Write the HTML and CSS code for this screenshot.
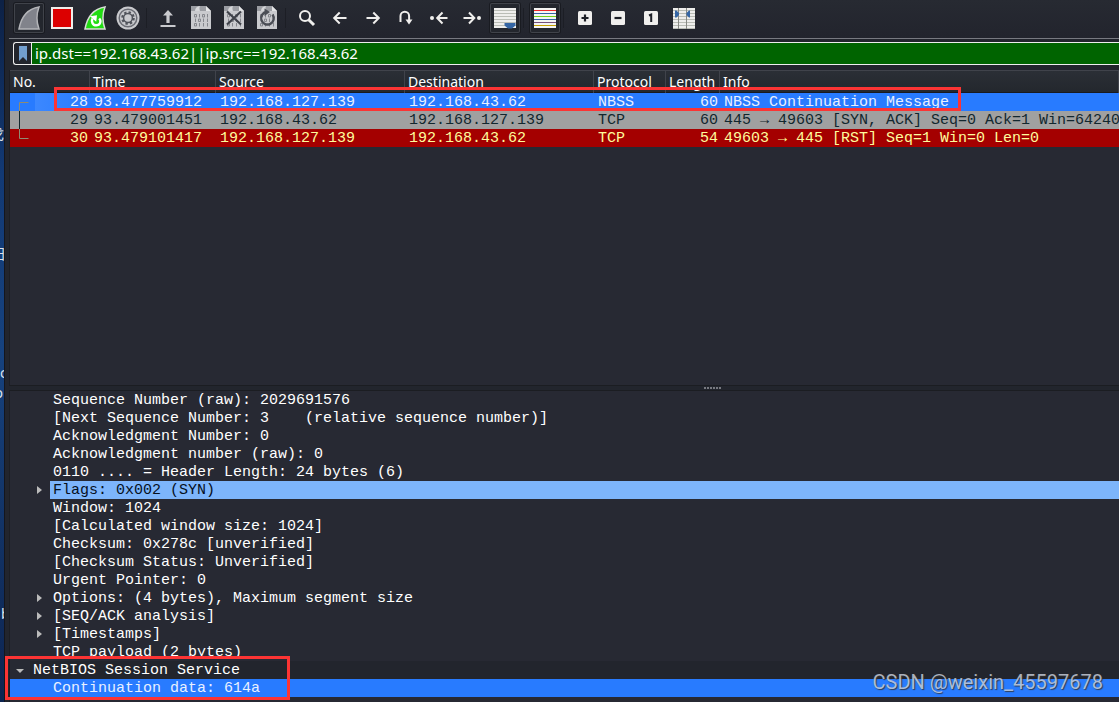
FILE: index.html
```
<!DOCTYPE html>
<html lang="en">
<head>
<meta charset="utf-8">
<title>Packet capture</title>
<link rel="stylesheet" href="styles.css">
</head>
<body>
<div class="desktop" aria-hidden="true">
  <span class="frag frag-a">戈</span>
  <span class="frag frag-b">日</span>
  <span class="frag frag-c">c</span>
  <span class="frag frag-d">o</span>
  <span class="frag frag-e">b</span>
</div>
<main class="window">
  <div class="toolbar" role="toolbar" aria-label="Capture tools">
    <button class="tool framed" aria-label="Start capture"><svg viewBox="0 0 30 30"><path d="M5 26C7 15 12 6 25 4c-3 8-3 14 0 22z" fill="#81838b" stroke="#b4b5b9" stroke-width="1.500"/></svg></button>
    <button class="tool" aria-label="Stop capture"><svg viewBox="0 0 30 30"><path d="M4 4h22v22H4z" fill="#f0eeea"/><path d="M6 6h18v18H6z" fill="#dc0000"/></svg></button>
    <button class="tool" aria-label="Restart capture"><svg viewBox="0 0 30 30"><path d="M5 26C7 15 12 6 25 4c-3 8-3 14 0 22z" fill="#21dc12" stroke="#d8dcd6" stroke-width="1.500"/><path d="M12.500 15.500c-1.500 3.200.2 6.800 3.700 6.800 4 0 5.500-4.300 3-6.800" fill="none" stroke="#fff" stroke-width="2.400"/><path d="M10 13.300l7-1-.8 6.400z" fill="#fff"/></svg></button>
    <button class="tool" aria-label="Capture options"><svg viewBox="0 0 30 30"><circle cx="15" cy="15" r="11.500" fill="#c9cace"/><circle cx="15" cy="15" r="8.800" fill="none" stroke="#6a6c74" stroke-width="1.500"/><circle cx="15" cy="15" r="5.500" fill="none" stroke="#50535b" stroke-width="2.600" stroke-dasharray="2.300 2"/><circle cx="15" cy="15" r="4.400" fill="#c9cace" stroke="#50535b" stroke-width="1.500"/></svg></button>
    <span class="sep"></span>
    <button class="tool" aria-label="Open"><svg viewBox="0 0 30 30"><path d="M15 7l5 5.500h-3.400V20h-3.200v-7.500H10zM7.500 22h15v2h-15z" fill="#c9cace"/></svg></button>
    <button class="tool" aria-label="Save"><svg viewBox="0 0 30 30"><use href="#doc"/></svg></button>
    <button class="tool" aria-label="Close file"><svg viewBox="0 0 30 30"><use href="#doc"/><path d="M8 8.500l14 13M22 8.500L8 21.500" stroke="#3e4149" stroke-width="2.200"/></svg></button>
    <button class="tool" aria-label="Reload file"><svg viewBox="0 0 30 30"><use href="#doc"/><path d="M20.500 11.500a6.300 6.300 0 1 1-6-2.500" fill="none" stroke="#4b4e56" stroke-width="2.400"/><path d="M12.500 5.500l5.500 3.500-5.500 4z" fill="#4b4e56"/></svg></button>
    <span class="sep"></span>
    <button class="tool" aria-label="Find"><svg viewBox="0 0 30 30"><circle cx="13" cy="13" r="5" class="line"/><path d="M16.700 16.700l5.300 5.300" class="line heavy"/></svg></button>
    <button class="tool" aria-label="Back"><svg viewBox="0 0 30 30"><path d="M21.500 15H9.500M14.700 9.500L9.200 15l5.500 5.500" class="line"/></svg></button>
    <button class="tool" aria-label="Forward"><svg viewBox="0 0 30 30"><path d="M8.500 15h12M15.300 9.500l5.500 5.500-5.500 5.500" class="line"/></svg></button>
    <button class="tool" aria-label="Go to packet"><svg viewBox="0 0 30 30"><path d="M9.500 19V13a4.300 4.300 0 0 1 8.600 0v5" class="line"/><path d="M14.500 16.500h7L18 21.500z" fill="#f0efed"/></svg></button>
    <button class="tool" aria-label="First packet"><svg viewBox="0 0 30 30"><path d="M23.500 15h-9M18.500 9.500L13.200 15l5.300 5.500" class="line"/><circle cx="8" cy="15" r="2" fill="#f0efed"/></svg></button>
    <button class="tool" aria-label="Last packet"><svg viewBox="0 0 30 30"><path d="M6.500 15h10M12 9.500l5.300 5.500-5.300 5.500" class="line"/><circle cx="22" cy="15" r="2" fill="#f0efed"/></svg></button>
    <button class="tool framed" aria-label="Auto scroll"><svg viewBox="0 0 30 30"><path d="M4 5h22v20H4z" fill="#eeeeec"/><path d="M4 7.500h22M4 10.500h22M4 13.500h22M4 16.500h22M4 19.500h22M4 22.500h22" stroke="#babdb6"/><path d="M14.500 20h11v2.500L22 25.500h-4L14.500 22.500z" fill="#3465a4"/></svg></button>
    <span class="sep"></span>
    <button class="tool framed" aria-label="Colorize"><svg viewBox="0 0 30 30"><path d="M4 5h22v20H4z" fill="#f5f5f3"/><path d="M4 7.500h22" stroke="#ef2929"/><path d="M4 10.500h22M4 16.500h22" stroke="#3465a4"/><path d="M4 13.500h22" stroke="#73d216"/><path d="M4 19.500h22" stroke="#75507b"/><path d="M4 22.500h22" stroke="#c4a000"/></svg></button>
    <span class="sep"></span>
    <button class="tool" aria-label="Zoom in"><svg viewBox="0 0 30 30"><rect x="8" y="8" width="14" height="14" rx="1.500" fill="#f0efed"/><path d="M11.500 15h7M15 11.500v7" stroke="#1d1f26" stroke-width="2.200"/></svg></button>
    <button class="tool" aria-label="Zoom out"><svg viewBox="0 0 30 30"><rect x="8" y="8" width="14" height="14" rx="1.500" fill="#f0efed"/><path d="M11.500 15h7" stroke="#1d1f26" stroke-width="2.200"/></svg></button>
    <button class="tool" aria-label="Normal size"><svg viewBox="0 0 30 30"><rect x="8" y="8" width="14" height="14" rx="1.500" fill="#f0efed"/><path d="M13 12.500l2.200-1V19" fill="none" stroke="#1d1f26" stroke-width="2"/></svg></button>
    <button class="tool" aria-label="Resize columns"><svg viewBox="0 0 30 30"><path d="M4 5h22v21H4z" fill="#eeeeec"/><path d="M4 7.500h22M4 10.500h22M4 13.500h22M4 16.500h22M4 19.500h22M4 22.500h22M4 25.500h22" stroke="#babdb6"/><path d="M9.500 5v21M17.500 5v21" stroke="#888a85"/><path d="M6 7.500h1.500L10 10v2l-2.500 2.500H6zM21 7.500h-1L17.500 10v2l2.500 2.500h1z" fill="#3465a4"/></svg></button>
  </div>

  <form class="filter">
    <button type="button" class="bookmark" aria-label="Filter bookmarks"><svg viewBox="0 0 8 15"><path d="M0 0h8v15l-4-4-4 4z" fill="#729fcf"/></svg></button>
    <input class="filter-text" type="text" aria-label="Display filter" value="ip.dst==192.168.43.62||ip.src==192.168.43.62">
  </form>

  <section class="packets">
    <table class="grid">
      <colgroup><col class="c-no"><col class="c-time"><col class="c-addr"><col class="c-addr"><col class="c-proto"><col class="c-len"><col></colgroup>
      <thead><tr><th>No.</th><th>Time</th><th>Source</th><th>Destination</th><th>Protocol</th><th>Length</th><th>Info</th></tr></thead>
      <tbody>
        <tr class="selected"><td class="num"><span class="no"><svg class="link" viewBox="0 0 30 18"><path d="M18.500 9.500H9.500V18" /></svg>28</span></td><td>93.477759912</td><td>192.168.127.139</td><td>192.168.43.62</td><td>NBSS</td><td class="num">60</td><td>NBSS Continuation Message</td></tr>
        <tr class="gray"><td class="num"><span class="no"><svg class="link" viewBox="0 0 30 18"><path d="M9.500 0v18"/></svg>29</span></td><td>93.479001451</td><td>192.168.43.62</td><td>192.168.127.139</td><td>TCP</td><td class="num">60</td><td>445 → 49603 [SYN, ACK] Seq=0 Ack=1 Win=64240</td></tr>
        <tr class="reset"><td class="num"><span class="no"><svg class="link" viewBox="0 0 30 18"><path d="M9.500 0v9.500h9"/></svg>30</span></td><td>93.479101417</td><td>192.168.127.139</td><td>192.168.43.62</td><td>TCP</td><td class="num">54</td><td>49603 → 445 [RST] Seq=1 Win=0 Len=0</td></tr>
      </tbody>
    </table>
    <div class="mark mark-packet"></div>
  </section>

  <div class="splitter"><i></i><i></i><i></i><i></i><i></i><i></i></div>

  <section class="details">
    <ul class="tree">
      <li>Sequence Number (raw): 2029691576</li>
      <li>[Next Sequence Number: 3    (relative sequence number)]</li>
      <li>Acknowledgment Number: 0</li>
      <li>Acknowledgment number (raw): 0</li>
      <li>0110 .... = Header Length: 24 bytes (6)</li>
      <li class="closed"><span class="flags">Flags: 0x002 (SYN)</span></li>
      <li>Window: 1024</li>
      <li>[Calculated window size: 1024]</li>
      <li>Checksum: 0x278c [unverified]</li>
      <li>[Checksum Status: Unverified]</li>
      <li>Urgent Pointer: 0</li>
      <li class="closed">Options: (4 bytes), Maximum segment size</li>
      <li class="closed">[SEQ/ACK analysis]</li>
      <li class="closed">[Timestamps]</li>
      <li>TCP payload (2 bytes)</li>
      <li class="top open">NetBIOS Session Service</li>
      <li class="chosen">Continuation data: 614a</li>
    </ul>
    <div class="mark mark-detail"></div>
  </section>
</main>
<div class="watermark">CSDN @weixin_45597678</div>

<svg class="defs" aria-hidden="true"><defs><g id="doc"><path d="M5 3h15l5 5v18H5z" fill="#c9cace"/><path d="M5 3h15v5H5z" fill="#9b9da3"/><path d="M9 8c0-3 2-4.500 5-5-1 2-.5 3.500 0 5z" fill="#d5d6d9"/><path d="M20 3v5h5z" fill="#e4e5e7"/><g fill="none" stroke="#85878d" stroke-width="1"><path d="M8.500 11.500h2v2.500h-2zM16.500 11.500h2v2.500h-2zM12.500 16h2v2.500h-2zM8.500 20.500h2v2.500h-2zM13.500 11v3.500M21.500 11v3.500M9.500 15.500V19M17.500 15.500V19M21.500 15.500V19M13.500 20v3.500M17.500 20v3.500M21.500 20v3.500"/></g></g></defs></svg>
</body>
</html>
```
FILE: styles.css
```
* { box-sizing: border-box; }

body {
  margin: 0;
  height: 100vh;
  display: flex;
  overflow: hidden;
  background: #22242c;
  color: #fff;
  font-family: "Noto Sans", "Noto Sans CJK SC", sans-serif;
  font-size: 14px;
}

.defs { position: absolute; width: 0; height: 0; }

.desktop {
  position: relative;
  flex: none;
  width: 4px;
  overflow: hidden;
  background: linear-gradient(#0d2145, #123974 25%, #16427e 50%, #123365 75%, #0d2450);
}

/* Icon captions showing from under the window edge */
.frag { position: absolute; font-size: 14px; line-height: 20px; color: #dde3ea; }
.frag-a { top: 124px; right: 0; }
.frag-b { top: 244px; right: -2px; }
.frag-c { top: 363px; left: 0; }
.frag-d { top: 383px; right: 1px; }
.frag-e { top: 604px; left: 1px; }

.window {
  flex: 1;
  min-width: 0;
  display: flex;
  flex-direction: column;
  border-left: 1px solid #14161d;
  padding-left: 4px;
  background: #22252d;
}

.toolbar {
  flex: none;
  display: flex;
  gap: 3px;
  height: 39px;
  padding: 3px 0 0 5px;
  border-bottom: 1px solid #777980;
  background: linear-gradient(#272a32, #22242d);
}

.tool {
  flex: none;
  width: 30px;
  height: 30px;
  padding: 0;
  border: 0;
  border-radius: 2px;
  background: none;
}

.tool svg { display: block; width: 30px; height: 30px; }
.framed { background: #23262d; box-shadow: inset 0 0 0 1px #40434a, 0 0 0 1px #191b21; }
.line { fill: none; stroke: #f0efed; stroke-width: 2; }
.heavy { stroke-width: 3; }

.sep { flex: none; width: 4px; height: 20px; margin-top: 5px; border-left: 1px solid #1c1e25; }

.filter {
  flex: none;
  display: flex;
  height: 23px;
  margin: 3px 0 5px 4px;
  border: 1px solid #eee;
  border-right: 0;
  border-radius: 3px 0 0 3px;
  background: #22252d;
}

.bookmark {
  width: 18px;
  padding: 0 5px;
  border: 0;
  border-right: 1px solid #eee;
  background: none;
}

.bookmark svg { display: block; width: 8px; height: 15px; }

.filter-text {
  flex: 1;
  min-width: 0;
  padding: 0 3px;
  border: 0;
  outline: 0;
  background: #006400;
  color: #fff;
  font: 15px/21px "Noto Sans", sans-serif;
}

.packets {
  position: relative;
  flex: 1;
  min-height: 0;
  border-left: 1px solid #1c1e24;
  background: #272933;
}

.grid {
  width: 100%;
  table-layout: fixed;
  border-collapse: collapse;
  font: 15px/17px "Liberation Mono", monospace;
}

.c-no { width: 80px; }
.c-time { width: 126px; }
.c-addr { width: 189px; }
.c-proto { width: 72px; }
.c-len { width: 54px; }

.grid th {
  height: 23px;
  padding: 0 0 0 3px;
  text-align: left;
  font: 14px/22px "Noto Sans", sans-serif;
  background: linear-gradient(#2b2f36, #23272d);
  box-shadow: inset -1px 0 #40434b, inset 0 1px #40434b, inset 0 -1px #181a20;
}

.grid td { height: 18px; padding: 1px 0 0 4px; white-space: pre; overflow: hidden; }
.grid td.num { padding: 1px 2px 0 0; text-align: right; }

.no { display: flex; justify-content: space-between; height: 17px; }
.link { width: 30px; height: 18px; margin-top: -1px; fill: none; stroke: #8f8b72; }

.selected { background: #287bff; color: #e8f0ff; }
.selected .num:first-child { background: linear-gradient(90deg, #287bff 25px, #3c88ff 25px, #287bff 100%); }
.gray { background: #a0a0a0; color: #12272e; }
.gray .link { stroke: #12272e; }
.reset { background: #a40000; color: #fffc9c; }

/* Red annotation frames */
.mark { position: absolute; border: 3px solid #fc3434; }
.mark-packet { top: 17px; left: 44px; width: 907px; height: 24px; }
.mark-detail { bottom: 2px; left: -5px; width: 285px; height: 44px; }

.splitter {
  flex: none;
  display: flex;
  justify-content: center;
  align-items: center;
  gap: 1px;
  height: 6px;
  padding-left: 296px;
  border: 1px solid #1b1d22;
  border-width: 1px 0;
}

.splitter i { width: 2px; height: 2px; background: #777980; }

.details {
  position: relative;
  flex: none;
  padding-bottom: 5px;
  border-left: 1px solid #1c1e24;
  background: #272933;
}

.tree {
  margin: 0;
  padding: 0;
  list-style: none;
  font: 15px/17px "Liberation Mono", monospace;
}

.tree li { display: flex; height: 18px; padding: 1px 0 0 43px; white-space: pre; }
.tree .top { padding-left: 23px; background: linear-gradient(90deg, #272933 20px, #22252d 20px); }
.tree .chosen { background: #287bff; color: #e8f0ff; }

.closed::before {
  content: "";
  width: 5px;
  height: 8px;
  margin: 4px 11px 0 -16px;
  background: #bbb;
  clip-path: polygon(0 0, 100% 50%, 0 100%);
}

.open::before {
  content: "";
  width: 8px;
  height: 4px;
  margin: 7px 9px 0 -17px;
  background: #bbb;
  clip-path: polygon(0 0, 100% 0, 50% 100%);
}

.flags { flex: 1; margin: -1px 0 0 -3px; padding: 1px 0 0 3px; background: #7db5fb; color: #06101e; }

.watermark {
  position: absolute;
  right: 16px;
  bottom: 8px;
  font: 20px/24px Roboto, sans-serif;
  color: #c3c9d4;
  opacity: .85;
  text-shadow: 1px 1px 1px #333;
}
```
